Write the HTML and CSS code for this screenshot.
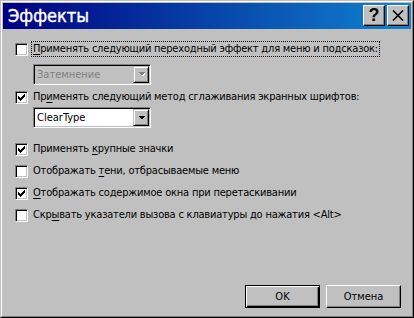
FILE: index.html
```html
<!DOCTYPE html>
<html lang="ru">
<head>
    <meta charset="UTF-8">
    <meta name="viewport" content="width=device-width, initial-scale=1.0">
    <title>Эффекты</title>
    <link rel="stylesheet" href="styles.css">
</head>
<body>
    <div class="window">
        <div class="frame">
            <div class="titlebar">
                <span class="title">Эффекты</span>
                <div class="title-buttons">
                    <span class="tbtn help">?</span>
                    <span class="tbtn close">
                        <svg width="12" height="11" viewBox="0 0 12 11">
                            <path d="M1 0.5 L11 10.5 M11 0.5 L1 10.5" stroke="#000" stroke-width="1.6" fill="none"/>
                        </svg>
                    </span>
                </div>
            </div>

            <div class="body">
                <div class="options">
                    <div class="option row1">
                        <span class="check"></span>
                        <span class="text focus"><u>П</u>рименять следующий переходный эффект для меню и подсказок:</span>
                    </div>
                    <div class="combo disabled c1">
                        <span class="combo-text">Затемнение</span>
                        <span class="drop">
                            <svg width="7" height="5" viewBox="0 0 7 5">
                                <path d="M1 1 H8 L4.5 4.5 Z" fill="#fff"/>
                                <path d="M0 0 H7 L3.5 3.5 Z" fill="#808080"/>
                            </svg>
                        </span>
                    </div>
                    <div class="option row2">
                        <span class="check on">
                            <svg width="7" height="7" viewBox="0 0 7 7"><path d="M0 2 L2 4 L7 -1 V2 L2 7 L0 5 Z" fill="#000"/></svg>
                        </span>
                        <span class="text">Пр<u>и</u>менять следующий метод сглаживания экранных шрифтов:</span>
                    </div>
                    <div class="combo c2">
                        <span class="combo-text">ClearType</span>
                        <span class="drop">
                            <svg width="7" height="4" viewBox="0 0 7 4"><path d="M0 0 H7 L3.5 3.5 Z" fill="#000"/></svg>
                        </span>
                    </div>
                    <div class="option row3">
                        <span class="check on">
                            <svg width="7" height="7" viewBox="0 0 7 7"><path d="M0 2 L2 4 L7 -1 V2 L2 7 L0 5 Z" fill="#000"/></svg>
                        </span>
                        <span class="text">Применять <u>к</u>рупные значки</span>
                    </div>
                    <div class="option">
                        <span class="check"></span>
                        <span class="text">Отображать <u>т</u>ени, отбрасываемые меню</span>
                    </div>
                    <div class="option">
                        <span class="check on">
                            <svg width="7" height="7" viewBox="0 0 7 7"><path d="M0 2 L2 4 L7 -1 V2 L2 7 L0 5 Z" fill="#000"/></svg>
                        </span>
                        <span class="text"><u>О</u>тображать содержимое окна при перетаскивании</span>
                    </div>
                    <div class="option">
                        <span class="check"></span>
                        <span class="text">Скр<u>ы</u>вать указатели вызова с клавиатуры до нажатия &lt;Alt&gt;</span>
                    </div>
                </div>

                <div class="footer">
                    <span class="btn default">OK</span>
                    <span class="btn">Отмена</span>
                </div>
            </div>
        </div>
    </div>
</body>
</html>
```

FILE: styles.css
```css
body {
    margin: 0;
    padding: 0;
    font-family: "DejaVu Sans Condensed", "Liberation Sans", sans-serif;
    font-size: 11px;
    color: #000;
    background-color: #c0c0c0;
}
.window {
    width: 414px;
    height: 318px;
    box-sizing: border-box;
    border: 1px solid;
    border-color: #c0c0c0 #000 #000 #c0c0c0;
    background-color: #c0c0c0;
}
.frame {
    height: 100%;
    box-sizing: border-box;
    border: 1px solid;
    border-color: #fff #808080 #808080 #fff;
    padding: 1px;
    display: flex;
    flex-direction: column;
}
.titlebar {
    height: 26px;
    display: flex;
    align-items: flex-start;
    justify-content: space-between;
    background: linear-gradient(to right, #000080, #1084d0);
}
.title {
    color: #fff;
    font-family: "DejaVu Sans Condensed", "DejaVu Sans", sans-serif;
    font-size: 18px;
    line-height: 26px;
    padding-left: 5px;
    -webkit-text-stroke: 0.4px #fff;
}
.title-buttons {
    display: flex;
    gap: 2px;
    padding: 2px 2px 0 0;
}
.tbtn {
    width: 22px;
    height: 21px;
    box-sizing: border-box;
    display: flex;
    align-items: center;
    justify-content: center;
    background-color: #c0c0c0;
    border: 1px solid;
    border-color: #fff #000 #000 #fff;
    box-shadow: inset -1px -1px #808080;
}
.tbtn.help {
    font-family: "Liberation Sans", sans-serif;
    font-weight: bold;
    font-size: 18px;
    line-height: 19px;
}
.body {
    flex: 1;
    display: flex;
    flex-direction: column;
    padding: 12px 10px 7px 12px;
}
.option {
    display: flex;
    align-items: center;
    height: 16px;
    margin-top: 6px;
}
.option.row1 {
    margin-top: 0;
}
.option.row2 {
    margin-top: 4px;
}
.option.row3 {
    margin-top: 13px;
}
.check {
    width: 13px;
    height: 13px;
    box-sizing: border-box;
    flex-shrink: 0;
    display: flex;
    align-items: center;
    justify-content: center;
    background-color: #fff;
    border: 1px solid;
    border-color: #808080 #fff #fff #808080;
    box-shadow: inset 1px 1px #000, inset -1px -1px #c0c0c0;
}
.check svg {
    display: block;
    shape-rendering: crispEdges;
}
.text {
    margin-left: 3px;
    padding: 0 1px;
    line-height: 14px;
    letter-spacing: -0.2px;
    border: 1px dotted transparent;
    white-space: nowrap;
}
.text.focus {
    border-color: #000;
}
.text u {
    text-decoration-thickness: 1px;
    text-underline-offset: 2px;
}
.combo {
    width: 118px;
    height: 21px;
    box-sizing: border-box;
    margin-left: 18px;
    padding: 1px;
    display: flex;
    background-color: #fff;
    border: 1px solid;
    border-color: #808080 #fff #fff #808080;
    box-shadow: inset 1px 1px #000, inset -1px -1px #c0c0c0;
}
.combo.c1 {
    margin-top: 7px;
}
.combo.c2 {
    margin-top: 2px;
}
.combo.disabled {
    background-color: #c0c0c0;
    color: #808080;
}
.combo-text {
    flex: 1;
    padding-left: 2px;
    line-height: 17px;
}
.drop {
    width: 16px;
    height: 17px;
    box-sizing: border-box;
    display: flex;
    align-items: center;
    justify-content: center;
    background-color: #c0c0c0;
    border: 1px solid;
    border-color: #c0c0c0 #000 #000 #c0c0c0;
    box-shadow: inset 1px 1px #fff, inset -1px -1px #808080;
}
.drop svg {
    display: block;
    shape-rendering: crispEdges;
}
.footer {
    margin-top: auto;
    display: flex;
    justify-content: flex-end;
    gap: 6px;
}
.btn {
    width: 75px;
    height: 23px;
    box-sizing: border-box;
    display: flex;
    align-items: center;
    justify-content: center;
    background-color: #c0c0c0;
    border: 1px solid;
    border-color: #fff #000 #000 #fff;
    box-shadow: inset -1px -1px #808080;
}
.btn.default {
    border-color: #000;
    box-shadow: inset 1px 1px #fff, inset -1px -1px #000, inset -2px -2px #808080;
}
```
